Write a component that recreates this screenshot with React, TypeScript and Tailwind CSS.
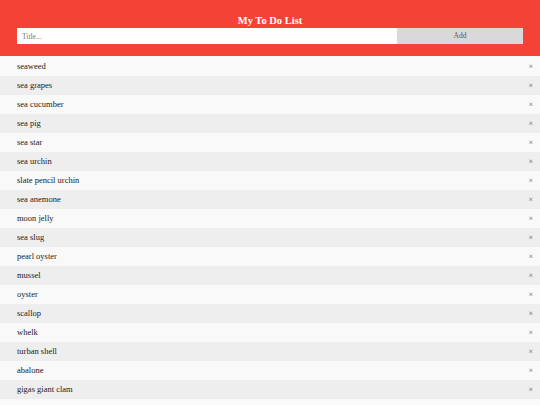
const items = [
  'seaweed',
  'sea grapes',
  'sea cucumber',
  'sea pig',
  'sea star',
  'sea urchin',
  'slate pencil urchin',
  'sea anemone',
  'moon jelly',
  'sea slug',
  'pearl oyster',
  'mussel',
  'oyster',
  'scallop',
  'whelk',
  'turban shell',
  'abalone',
  'gigas giant clam',
];

export default function App() {
  return (
    <div className="h-[405px] overflow-hidden bg-[#f9f9f9] font-['Liberation_Serif',serif]">
      <div className="bg-[#f44336] px-[17px] pt-[14px] pb-[12px] text-center">
        <h2 className="text-[10.5px] font-bold leading-[14px] text-white">My To Do List</h2>
        <div className="flex">
          <input
            type="text"
            placeholder="Title..."
            className="h-4 flex-1 bg-white px-[5px] text-[7.5px] text-[#333] outline-none placeholder:text-[#757575]"
          />
          <span className="flex h-4 w-[126px] items-center justify-center bg-[#d9d9d9] text-[7.5px] text-[#555]">
            Add
          </span>
        </div>
      </div>
      <ul className="mt-px">
        {items.map((item, i) => (
          <li
            key={item}
            className={`flex h-[19px] items-center justify-between pl-[17px] pr-[7px] text-[8.5px] text-[#222] ${
              i % 2 === 0 ? 'bg-[#f9f9f9]' : 'bg-[#eeeeee]'
            }`}
          >
            <span>{item}</span>
            <span className="text-[8px] text-[#555]">×</span>
          </li>
        ))}
      </ul>
    </div>
  );
}
